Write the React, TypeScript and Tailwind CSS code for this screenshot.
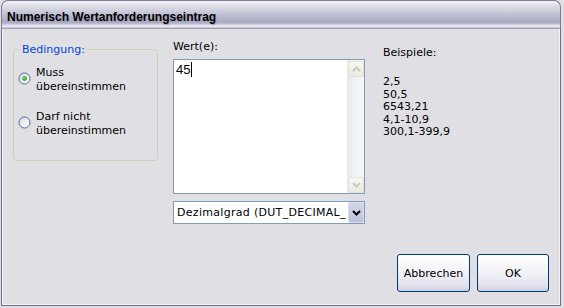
import React from 'react';

const examples = ['2,5', '50,5', '6543,21', '4,1-10,9', '300,1-399,9'];

const Radio: React.FC<{ checked?: boolean; id: string }> = ({ checked, id }) => (
  <svg width="13" height="13" viewBox="0 0 13 13" className="shrink-0 mt-[6px]">
    <defs>
      <linearGradient id={`rf-${id}`} x1="0" y1="0" x2="1" y2="1">
        <stop offset="0" stopColor="#d4d4dc" />
        <stop offset="0.6" stopColor="#f4f4f6" />
        <stop offset="1" stopColor="#ffffff" />
      </linearGradient>
      <radialGradient id={`rd-${id}`} cx="0.4" cy="0.4" r="0.6">
        <stop offset="0" stopColor="#8fe27a" />
        <stop offset="1" stopColor="#1f9a1f" />
      </radialGradient>
    </defs>
    <circle cx="6.5" cy="6.5" r="5.5" fill={`url(#rf-${id})`} stroke="#4b6c98" />
    {checked && <circle cx="6.5" cy="6.5" r="2.4" fill={`url(#rd-${id})`} />}
  </svg>
);

const Chevron: React.FC<{ up?: boolean; color: string }> = ({ up, color }) => (
  <svg width="9" height="6" viewBox="0 0 9 6">
    <polyline
      points={up ? '1,5 4.5,1.5 8,5' : '1,1 4.5,4.5 8,1'}
      fill="none"
      stroke={color}
      strokeWidth="2"
    />
  </svg>
);

const ScrollBtn: React.FC<{ up?: boolean }> = ({ up }) => (
  <div className="w-[16px] h-[16px] flex items-center justify-center rounded-[2px] border border-[#e2e2da] bg-[linear-gradient(to_bottom,#f7f7f3,#ebebe4)]">
    <Chevron up={up} color="#c9c9bd" />
  </div>
);

const XpButton: React.FC<{ label: string; w: string }> = ({ label, w }) => (
  <button
    className={`${w} h-[38px] rounded-[3px] border border-[#003c74] bg-[linear-gradient(to_bottom,#ffffff_0%,#f3f3f8_45%,#e2e2ee_85%,#cfcfe0_100%)] text-[11px] leading-[13px] text-black`}
  >
    {label}
  </button>
);

const App: React.FC = () => {
  return (
    <div className="w-[564px] h-[308px] bg-[#e0dfe3] font-['DejaVu_Sans',sans-serif] text-[11px] leading-[13px] text-black">
      <div className="ml-[1px] w-[560px] h-[306px] flex flex-col">
        {/* title bar */}
        <div className="h-[29px] shrink-0 rounded-t-[7px] border border-b-0 border-[#7c7c98] bg-[linear-gradient(to_bottom,#f6f6f9_0%,#e2e2ea_14%,#c4c4d6_45%,#a9a9c4_74%,#b6b6cc_80%,#dcdce8_86%,#ececf3_91%,#b9b9cb_96%,#8e8ea9_100%)] pl-[5px] pt-[9px]">
          <span className="font-['Liberation_Sans',sans-serif] font-bold text-[12px] leading-[15px] [text-shadow:1px_1px_1px_#a0a0b8]">
            Numerisch Wertanforderungseintrag
          </span>
        </div>

        {/* client area */}
        <div className="flex-1 flex flex-col border-x border-b border-[#6e6e8a] shadow-[inset_1px_0_0_#f4f4f8,inset_-1px_0_0_#f4f4f8,inset_0_-1px_0_#f4f4f8]">
          <div className="flex items-start pl-[11px]">
            <fieldset className="mt-[14px] w-[145px] h-[118px] rounded-[4px] border border-[#d0d0bf]">
              <legend className="ml-[6px] px-[2px] text-[#0046d5]">Bedingung:</legend>
              <div className="flex flex-col gap-[16px] pt-[10px] pl-[4px] leading-[14px]">
                <div className="flex items-start gap-[5px]">
                  <Radio id="a" checked />
                  <span>
                    Muss
                    <br />
                    übereinstimmen
                  </span>
                </div>
                <div className="flex items-start gap-[5px]">
                  <Radio id="b" />
                  <span>
                    Darf nicht
                    <br />
                    übereinstimmen
                  </span>
                </div>
              </div>
            </fieldset>

            <div className="ml-[15px] mt-[11px] w-[192px] flex flex-col">
              <span>Wert(e):</span>
              <div className="mt-[6px] h-[135px] flex border border-[#7f9db9] bg-white">
                <div className="flex-1 pl-[2px] pt-[2px] flex items-start">
                  <span className="font-['Liberation_Sans',sans-serif] text-[13px] leading-[15px]">45</span>
                  <span className="ml-[1px] w-px h-[15px] bg-black" />
                </div>
                <div className="w-[17px] flex flex-col justify-between pt-[1px] pl-[1px] bg-[linear-gradient(to_right,#eaeaf0,#f8f8fb)]">
                  <ScrollBtn up />
                  <ScrollBtn />
                </div>
              </div>
              <div className="mt-[7px] h-[23px] flex border border-[#7f9db9] bg-white">
                <div className="flex-1 whitespace-nowrap pl-[3px] pt-[4px] tracking-[0.3px]">
                  Dezimalgrad (DUT_DECIMAL_
                </div>
                <div className="w-[16px] flex items-center justify-center rounded-[2px] border border-[#d8dcec] bg-[linear-gradient(to_bottom,#d2d6e8,#bcc2da)]">
                  <Chevron color="#000000" />
                </div>
              </div>
            </div>

            <div className="ml-[18px] mt-[17px] flex flex-col">
              <span>Beispiele:</span>
              <div className="mt-[17px] flex flex-col leading-[12.6px]">
                {examples.map((ex) => (
                  <span key={ex}>{ex}</span>
                ))}
              </div>
            </div>
          </div>

          <div className="flex-1" />

          <div className="flex justify-end gap-[7px] pr-[11px] pb-[13px]">
            <XpButton label="Abbrechen" w="w-[73px]" />
            <XpButton label="OK" w="w-[72px]" />
          </div>
        </div>
      </div>
    </div>
  );
};

export default App;
